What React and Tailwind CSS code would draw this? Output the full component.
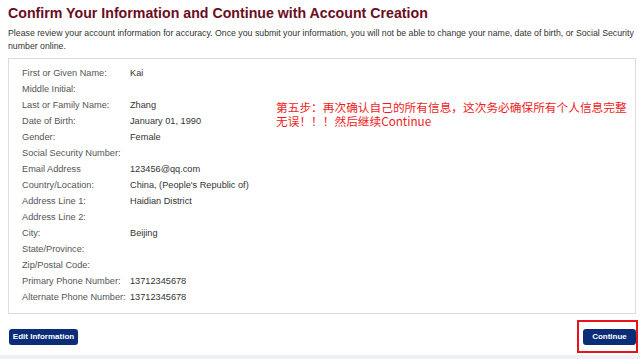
import React from 'react';

const rows = [
    ['First or Given Name:', 'Kai'],
    ['Middle Initial:', ''],
    ['Last or Family Name:', 'Zhang'],
    ['Date of Birth:', 'January 01, 1990'],
    ['Gender:', 'Female'],
    ['Social Security Number:', ''],
    ['Email Address', '123456@qq.com'],
    ['Country/Location:', "China, (People's Republic of)"],
    ['Address Line 1:', 'Haidian District'],
    ['Address Line 2:', ''],
    ['City:', 'Beijing'],
    ['State/Province:', ''],
    ['Zip/Postal Code:', ''],
    ['Primary Phone Number:', '13712345678'],
    ['Alternate Phone Number:', '13712345678'],
];

function App() {
    return (
        <div className="w-[640px] h-[359px] bg-white overflow-hidden flex flex-col font-['Liberation_Sans',Arial,sans-serif]">
            <div className="flex-1 pl-[8px] pr-[5px] pt-[5px]">
                <h1 className="text-[14.2px] leading-[16px] font-bold text-[#6b0d22]">
                    Confirm Your Information and Continue with Account Creation
                </h1>
                <p className="mt-[6px] w-[628px] text-[8.75px] leading-[13px] text-[#333]">
                    Please review your account information for accuracy. Once you submit your information, you will not be able to change your name, date of birth, or Social Security<br />
                    number online.
                </p>

                <div className="relative mt-[5px] w-[628px] border border-[#dcdcdc] pt-[7px] pb-[7px] pl-[13px]">
                    {rows.map(([label, value]) => (
                        <div key={label} className="flex h-[16px] items-center text-[9.2px] whitespace-nowrap">
                            <div className="w-[108px] text-[#555]">{label}</div>
                            <div className="text-[#333]">{value}</div>
                        </div>
                    ))}
                    <div className="absolute left-[267px] top-[41px] text-[11.7px] leading-[14px] text-[#ee1c25] font-['Noto_Sans_CJK_SC',sans-serif] whitespace-nowrap">
                        <div>第五步：再次确认自己的所有信息，这次务必确保所有个人信息完整</div>
                        <div>无误！！！然后继续Continue</div>
                    </div>
                </div>

                <div className="mt-[15px] flex items-start justify-between w-[628px]">
                    <button className="ml-[1px] h-[16px] w-[69px] rounded-[3px] bg-[#0b2d78] text-white text-[8px] font-bold leading-[16px]">
                        Edit Information
                    </button>
                    <div className="relative flex">
                        <button className="h-[16px] w-[53px] rounded-[3px] bg-[#0b2d78] text-white text-[8px] font-bold leading-[16px]">
                            Continue
                        </button>
                        <div className="absolute -left-[6px] -top-[9px] -right-[2px] -bottom-[8px] border-2 border-[#e8141c]" />
                    </div>
                </div>
            </div>
            <div className="h-[4px] bg-[#eef1f6]" />
        </div>
    );
}

export default App;
